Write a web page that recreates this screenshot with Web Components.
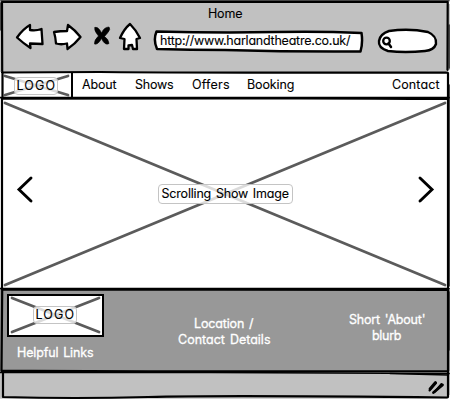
<!DOCTYPE html>
<html lang="en"><head><meta charset="utf-8"><title>Home</title>
<style>html,body{margin:0;width:450px;height:400px;overflow:hidden;background:#fff}</style></head>
<body><site-wireframe></site-wireframe>
<script>
const define=(name,html,after)=>customElements.define(name,class extends HTMLElement{
  constructor(){super();this.attachShadow({mode:'open'}).innerHTML=html}
  connectedCallback(){if(after)after.call(this)}
});
// A text line whose tracking is adjusted to a given width.
define('sketch-text',`<style>:host{display:block;white-space:nowrap;line-height:16px;height:16px}span{display:inline-block;word-spacing:1.500px}</style><span><slot></slot></span>`,function(){
  const s=this.shadowRoot.querySelector('span'),w=+this.getAttribute('w');
  this.style.width=w+'px';
  s.style.letterSpacing=(w+.5-s.getBoundingClientRect().width)/(this.textContent.length-1||1)+'px';
});
// A crossed placeholder box with a translucent caption.
define('image-placeholder',`<style>:host{display:grid;grid-template:minmax(0,1fr)/minmax(0,1fr);place-items:center;background:#fff}
svg{grid-area:1/1;width:100%;height:100%;overflow:visible}path{stroke:#5b5b5b;stroke-width:2.800;stroke-linecap:round;vector-effect:non-scaling-stroke}
div{grid-area:1/1;z-index:1;background:rgba(255,255,255,.78);border:1px solid #c4c4c4;border-radius:4px;padding:var(--cap-pad,1px 3px);transform:translate(var(--dx,0px),var(--dy,0px))}</style>
<svg viewBox="0 0 100 100" preserveAspectRatio="none"><path d="M0 0L100 100M100 0L0 100"/></svg><div><slot></slot></div>`);
define('browser-bar',`<style>:host{display:grid;grid-template-rows:22px 1fr;background:#c1c1c1}
.title{padding:6px 0 0 208px}.tools{display:flex;align-items:flex-start;padding-left:12px}svg{display:block;flex:none;fill:none;stroke:#000;stroke-width:2.300;stroke-linejoin:round;stroke-linecap:round}
.field{display:grid}.field svg,.field div{grid-area:1/1}.field div{padding:11px 0 0 8px}</style>
<div class="title"><sketch-text w="34">Home</sketch-text></div>
<div class="tools">
<svg width="140" height="40" viewBox="12 22 140 40"><g fill="#fff"><path d="M17 37.5Q23 29 30 25L30 30Q36 31 41.5 29L42.5 44L30 43.5L30.5 48Q23 43 17 37.5Z"/><path d="M54 32Q60 31 67 31L68 25Q75 30 80.5 37Q75 44 67.5 49L67 43.5Q61 45 56 43.500Q55.500 37 54 32Z"/><path d="M130 24Q136 30 140 38L136.5 39L137 49L133 49L132 45L128.500 45.500L128.500 49L124 49L124.500 39L120 38Q124 29 130 24Z"/></g>
<g fill="#000" stroke-width=".6"><path d="M95 27.500Q98.500 26.500 101.500 33Q104 27 109 27Q111 29 107.500 33L104.500 36.500Q108.500 39 109 43.500Q105 46 101.500 38.500Q98 45 94.500 44Q94 40 98.500 36Q93.500 30 95 27.500Z"/></g></svg>
<div class="field"><svg width="214" height="40" viewBox="152 22 214 40"><path fill="#fff" stroke-width="2.500" d="M156.500 31.500Q220 33 275 32Q320 31 361.500 33Q363 43 360.500 51.500Q295 52 225 50Q190 50 157 49Q153 40 156.500 31.500Z"/></svg><div><sketch-text w="190">http://www.harlandtheatre.co.uk/</sketch-text></div></div>
<svg width="78" height="40" viewBox="366 22 78 40"><path fill="#fff" stroke-width="2.400" d="M389 31Q409 28 428 32Q437 36 436 44Q434 50 425 51Q405 53 388 51Q378 48 379 41Q380 34 389 31Z"/><circle cx="386.500" cy="41" r="3.300" stroke-width="2.300"/><path stroke-width="2.500" d="M388.500 43.500L391 47"/></svg>
</div>`);
define('nav-bar',`<style>:host{display:flex;background:#fff}
.logo{box-sizing:border-box;width:73px;padding:4px 3px 4px 5px;border-right:2px solid #000;height:27px}
image-placeholder{height:19px;--cap-pad:0 2px;--dx:-1px;--dy:0px}nav{display:flex;flex:1;padding:5px 11px 0 9px}
nav *{margin-right:19px}nav :nth-child(3){margin-right:18px}nav :last-child{margin:0 0 0 auto}</style>
<div class="logo"><image-placeholder><sketch-text w="38">LOGO</sketch-text></image-placeholder></div>
<nav><sketch-text w="34">About</sketch-text><sketch-text w="38">Shows</sketch-text><sketch-text w="37">Offers</sketch-text><sketch-text w="47">Booking</sketch-text><sketch-text w="47">Contact</sketch-text></nav>`);
define('show-carousel',`<style>:host{display:grid;grid-template:minmax(0,1fr)/minmax(0,1fr);background:#fff}
image-placeholder{grid-area:1/1;margin:4px 5px 4px 5px;--dy:0px;--dx:0px;--cap-pad:1px 3px}
.nav{grid-area:1/1;z-index:1;display:flex;justify-content:space-between;padding:76px 15px 0 16px}
svg{fill:none;stroke:#000;stroke-width:2.900;stroke-linecap:round}</style>
<image-placeholder><sketch-text w="127">Scrolling Show Image</sketch-text></image-placeholder>
<div class="nav"><svg width="18" height="30"><path d="M15 3L3 14.500L15 26"/></svg><svg width="18" height="30"><path d="M3 3L15 14.500L3 26"/></svg></div>`);
define('site-footer',`<style>:host{display:grid;grid-template-columns:150px 150px 150px;background:#989898;color:#fff;-webkit-text-stroke:.3px #fff}
.logo{box-sizing:border-box;width:97px;height:43px;margin:5px 0 0 7px;border:2.500px solid #000;background:#fff;padding:2px 3px;color:#000;-webkit-text-stroke:.1px #000}
image-placeholder{height:34px;--cap-pad:0 2px;--dx:-1px;--dy:0px}
.links{padding:8px 0 0 17px}.location{padding-top:27px}.location :first-child{margin-left:44px}.location :last-child{margin-left:28px}.about{padding-top:23px}.about :first-child{margin-left:49px}.about :last-child{margin-left:72px}</style>
<div><div class="logo"><image-placeholder><sketch-text w="38">LOGO</sketch-text></image-placeholder></div><div class="links"><sketch-text w="76">Helpful Links</sketch-text></div></div>
<div class="location"><sketch-text w="59">Location /</sketch-text><sketch-text w="92">Contact Details</sketch-text></div>
<div class="about"><sketch-text w="76">Short 'About'</sketch-text><sketch-text w="29">blurb</sketch-text></div>`);
define('status-bar',`<style>:host{display:flex;justify-content:flex-end;background:#c1c1c1}svg{margin:8px 5px 0 0}path{stroke:#000;stroke-linecap:round;stroke-width:2.800}</style>
<svg width="18" height="16"><path d="M3 10L8.500 3.500M6.500 13.500L15.500 6"/><path style="stroke-width:2" d="M2.500 11.500L9 4M8 12.500L14.500 5"/></svg>`);
define('site-wireframe',`<style>:host{display:grid;width:450px;height:400px;font:12.5px/16px Inter,"Noto Sans",sans-serif;font-feature-settings:"cv11";color:#000;-webkit-text-stroke:.1px #000}
.page{grid-area:1/1;display:grid;grid-template-rows:72px 27px 190px 82px 29px}svg{grid-area:1/1;z-index:2;pointer-events:none;fill:none;stroke:#000;stroke-linecap:round}</style>
<div class="page"><browser-bar></browser-bar><nav-bar></nav-bar><show-carousel></show-carousel><site-footer></site-footer><status-bar></status-bar></div>
<svg width="450" height="400"><path stroke="#fff" stroke-width="2" d="M449.500 0V3M449.500 396V400M0 399.700H450M447 71H450"/>
<path stroke="#454545" stroke-width="1.500" d="M1 .700H449M.800 3V30M449.300 25V68M449.200 85V286M449.200 292V350"/>
<path stroke-width="2.200" d="M2 2Q150 1.500 447.500 2M2 2L2.200 71M447.700 2L447.500 70M2 72.500L100 72Q220 73 447.500 72.500M2.500 72V97M448 73V98M2 98.700Q100 99 220 98.500T448 99M2 99V289M448 99V289M2 289.500Q180 290.500 448 290M2.200 290L1.500 371M448 290V371M2 370.700Q200 372 448 371M3 372L3 397M448 371V397M3 397Q75 399 148 397T447 397.500"/>
<path stroke-width="1.700" d="M0 97.700H449M0 288.500H449M0 372.500H210L449 373.500"/><path stroke-width="1.300" d="M390 373.500L448 375"/></svg>`);
</script></body></html>
